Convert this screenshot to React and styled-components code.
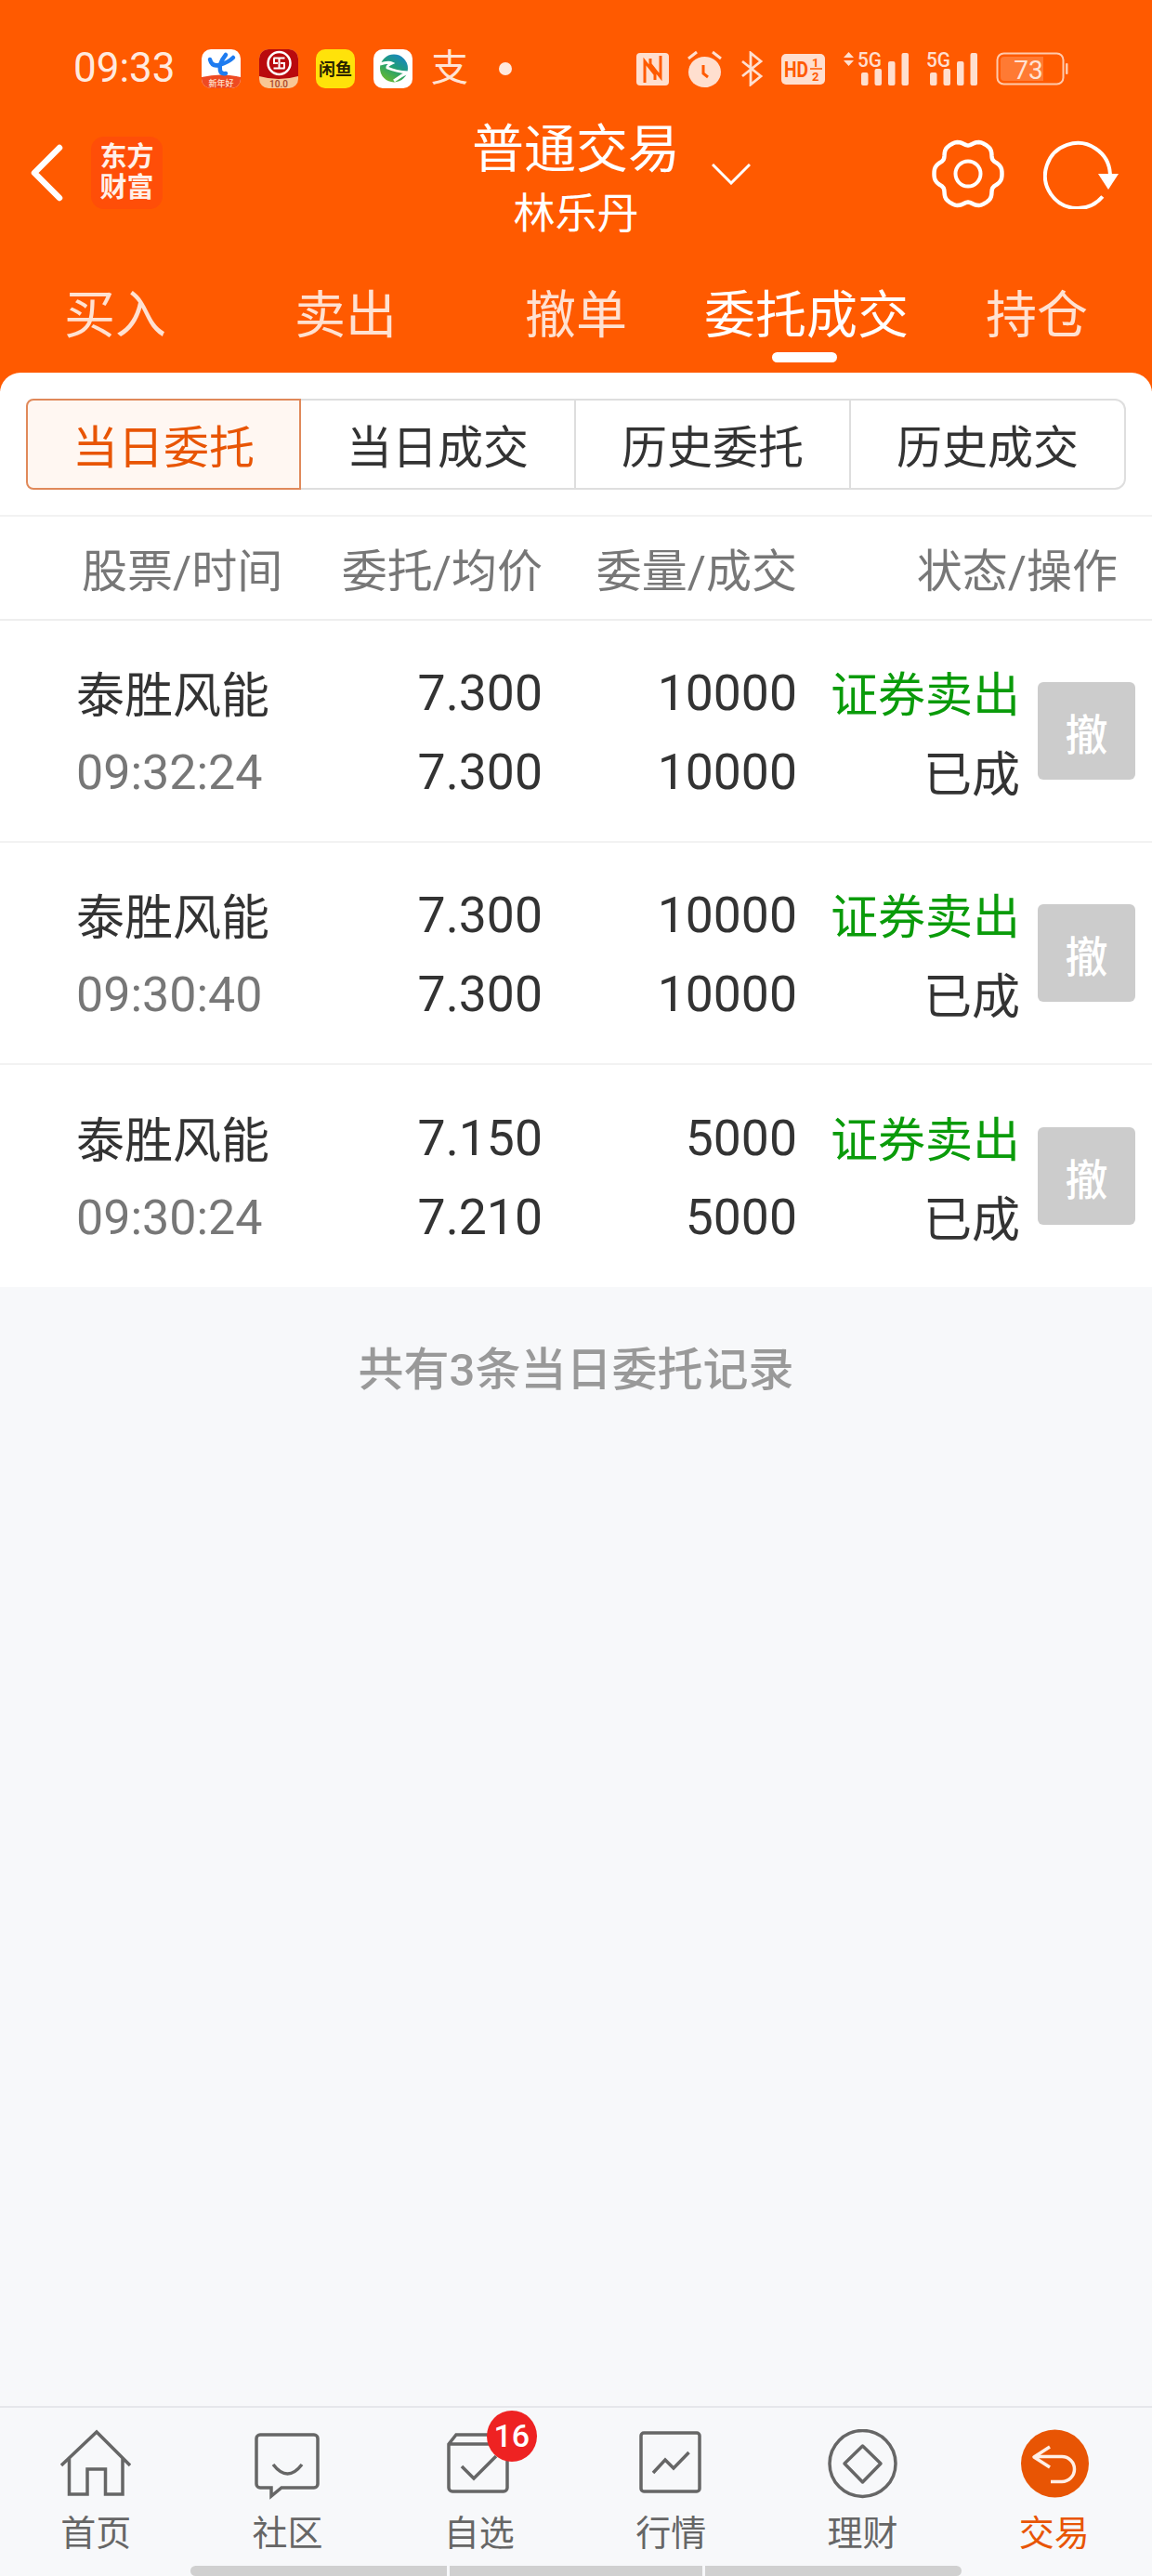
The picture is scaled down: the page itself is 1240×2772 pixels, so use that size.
import React from "react"
import styled, { createGlobalStyle } from "styled-components"

const FONT = `Roboto, "Noto Sans CJK SC", sans-serif`
const PEACH = "#FFDFCF"

const orders = [
  { name: "泰胜风能", time: "09:32:24", price: "7.300", avg: "7.300", qty: "10000", done: "10000" },
  { name: "泰胜风能", time: "09:30:40", price: "7.300", avg: "7.300", qty: "10000", done: "10000" },
  { name: "泰胜风能", time: "09:30:24", price: "7.150", avg: "7.210", qty: "5000", done: "5000" },
]

const mainTabs = ["买入", "卖出", "撤单", "委托成交", "持仓"]
const subTabs = ["当日委托", "当日成交", "历史委托", "历史成交"]

// wavy outline of the settings gear, broad lobes and tight notches
const gearPath = () => {
  const points = []
  for (let i = 0; i < 96; i++) {
    const a = (i / 96) * Math.PI * 2
    const dip = (1 - Math.cos(6 * a)) / 2
    const r = 36.5 - 6 * dip * dip
    points.push(`${(40 + r * Math.cos(a)).toFixed(2)} ${(40 + r * Math.sin(a)).toFixed(2)}`)
  }
  return `M${points.join("L")}Z`
}

function TelecomIcon() {
  return (
    <svg width="42" height="42" viewBox="0 0 42 42">
      <rect width="42" height="42" rx="10" fill="#fff" />
      <path d="M0 30 Q21 25 42 30 V32 A10 10 0 0 1 32 42 H10 A10 10 0 0 1 0 32Z" fill="#EE4A22" />
      <path d="M9 11 Q11 19 19 17 Q29 14 34 9 M26 6 Q18 16 20 23 Q21 27 26 26" fill="none" stroke="#1F7CF0" strokeWidth="4.500" strokeLinecap="round" />
      <text x="21" y="40" fontSize="9" fontWeight="500" fill="#FFE3D0" textAnchor="middle" fontFamily={FONT}>新年好</text>
    </svg>
  )
}

function BankIcon() {
  return (
    <svg width="42" height="42" viewBox="0 0 42 42">
      <rect width="42" height="42" rx="10" fill="#F8C795" />
      <path d="M0 10 A10 10 0 0 1 10 0 H32 A10 10 0 0 1 42 10 V29 Q21 35 0 29Z" fill="#B90A0E" />
      <circle cx="21.500" cy="15" r="12" fill="none" stroke="#fff" strokeWidth="2.500" />
      <path d="M15.500 9.500 H27.500 M15.500 20.500 H27.500 M16 9.500 V15 H20 M27 20.500 V15 H23 M21.500 9.500 V20.500" fill="none" stroke="#fff" strokeWidth="2" />
      <text x="21" y="40.500" fontSize="10" fontWeight="500" fill="#A8452A" textAnchor="middle" fontFamily={FONT}>10.0</text>
    </svg>
  )
}

function XianyuIcon() {
  return (
    <svg width="42" height="42" viewBox="0 0 42 42">
      <rect width="42" height="42" rx="10" fill="#FFE20A" />
      <text x="21" y="27.500" fontSize="18" fontWeight="700" fill="#2A2300" textAnchor="middle" fontFamily={FONT}>闲鱼</text>
    </svg>
  )
}

function GreenIcon() {
  return (
    <svg width="42" height="42" viewBox="0 0 42 42">
      <defs>
        <linearGradient id="globe" x1="0.8" y1="0" x2="0.2" y2="1">
          <stop offset="0" stopColor="#1784C8" />
          <stop offset="0.5" stopColor="#22A06F" />
          <stop offset="1" stopColor="#6DBB2C" />
        </linearGradient>
      </defs>
      <rect width="42" height="42" rx="10" fill="#fff" />
      <ellipse cx="22" cy="20.500" rx="15" ry="15" fill="url(#globe)" />
      <path d="M7 16 Q16 13 20 15 Q14 18 15 20 Q24 24 37 25 Q30 28 22 34" fill="none" stroke="#fff" strokeWidth="3" />
    </svg>
  )
}

function NfcIcon() {
  return (
    <svg width="35" height="35" viewBox="0 0 35 35">
      <rect width="35" height="35" rx="4" fill={PEACH} />
      <path d="M9 32 V9 L20 23 V29 M26 3 V26 L15 12 V6" fill="none" stroke="#FF5A00" strokeWidth="3" />
    </svg>
  )
}

function AlarmIcon() {
  return (
    <svg width="37" height="40" viewBox="0 0 37 40">
      <ellipse cx="18.500" cy="23.500" rx="17.500" ry="16.500" fill={PEACH} />
      <path d="M1 9 L10 2 M36 9 L27 2" stroke={PEACH} strokeWidth="3" />
      <path d="M17 16 V25 L22 29" fill="none" stroke="#FF5A00" strokeWidth="3" />
    </svg>
  )
}

function BluetoothIcon() {
  return (
    <svg width="25" height="38" viewBox="0 0 25 38">
      <path d="M2 11 L22 27 L11 36 V2 L22 11 L2 27" fill="none" stroke={PEACH} strokeWidth="2.800" />
    </svg>
  )
}

function HdIcon() {
  return (
    <svg width="47" height="33" viewBox="0 0 47 33">
      <rect width="47" height="33" rx="5" fill={PEACH} />
      <text x="3" y="25" fontSize="23" fontWeight="700" fill="#FF5A00" fontFamily={FONT} textLength="26" lengthAdjust="spacingAndGlyphs">HD</text>
      <text x="33" y="14" fontSize="13" fontWeight="700" fill="#FF5A00" fontFamily={FONT}>1</text>
      <path d="M31 16 H44" stroke="#FF5A00" strokeWidth="1.500" />
      <text x="33" y="29" fontSize="13" fontWeight="700" fill="#FF5A00" fontFamily={FONT}>2</text>
    </svg>
  )
}

function SignalIcon({ withArrows }) {
  const x = withArrows ? 15 : 0
  return (
    <svg width={55 + x} height="54" viewBox={`0 -8 ${55 + x} 54`}>
      {withArrows && <path d="M5.500 1 L11 7 H0Z M5.500 16 L11 10 H0Z" fill={PEACH} />}
      <text x={x} y="16.500" fontSize="22" fontWeight="500" fill={PEACH} fontFamily={FONT} textLength="26" lengthAdjust="spacingAndGlyphs">5G</text>
      <rect x={x + 4} y="23" width="7.500" height="14" rx="2" fill={PEACH} />
      <rect x={x + 18.500} y="19" width="7.500" height="18" rx="2" fill={PEACH} />
      <rect x={x + 33} y="11" width="7.500" height="26" rx="2" fill={PEACH} />
      <rect x={x + 47.500} y="2" width="7.500" height="35" rx="2" fill={PEACH} />
    </svg>
  )
}

function BatteryIcon() {
  return (
    <svg width="78" height="36" viewBox="0 0 78 36">
      <rect x="1.500" y="1.500" width="71" height="33" rx="7" fill="none" stroke="#FFC9AC" strokeWidth="2" />
      <path d="M5 9 A4 4 0 0 1 9 5 H51 V31 H9 A4 4 0 0 1 5 27Z" fill="#FF7A33" />
      <rect x="75" y="12" width="2.500" height="12" rx="1" fill="#FFC9AC" />
      <text x="35" y="28.500" fontSize="28" fill="#FFE3D4" textAnchor="middle" fontFamily={FONT}>73</text>
    </svg>
  )
}

function NavGlyph({ name }) {
  if (name === "home")
    return (
      <NavSvg viewBox="0 0 76 76">
        <path d="M1 39 L39 3 L75 39 M9.500 31 V70 H29 V43 H48.500 V70 H67 V31" />
      </NavSvg>
    )
  if (name === "chat")
    return (
      <NavSvg viewBox="0 0 76 76">
        <path d="M9 6 H67 a4 4 0 0 1 4 4 V59 a4 4 0 0 1 -4 4 H32 L21 72 V63 H9 a4 4 0 0 1 -4 -4 V10 a4 4 0 0 1 4 -4Z" />
        <path d="M23 38 Q38.500 58 54 38" />
      </NavSvg>
    )
  if (name === "box")
    return (
      <NavSvg viewBox="0 0 76 76">
        <path d="M5 16 L13 6 H60 L68 16 V63 a4 4 0 0 1 -4 4 H9 a4 4 0 0 1 -4 -4Z M5 16 H68" />
        <path d="M19 40 L32 53 L56 29" />
      </NavSvg>
    )
  if (name === "chart")
    return (
      <NavSvg viewBox="0 0 76 76">
        <rect x="6" y="4" width="63" height="63" rx="3" />
        <path d="M19 47 L32 33 L41 42 L57.500 25" />
      </NavSvg>
    )
  if (name === "diamond")
    return (
      <NavSvg viewBox="0 0 76 76">
        <circle cx="38.500" cy="37" r="35.500" />
        <path d="M19 37 L38.500 18 L58 37 L38.500 57Z" strokeLinejoin="round" />
      </NavSvg>
    )
  return (
    <NavSvg viewBox="0 0 76 76">
      <circle cx="38.500" cy="37" r="36.500" fill="#E85504" stroke="none" />
      <path d="M33 19 L16 30 L33 41 M17 29.500 H46 a13.500 13.500 0 0 1 0 27 H34" stroke="#FFEFE6" strokeLinejoin="round" />
    </NavSvg>
  )
}

const navItems = [
  { icon: "home", label: "首页" },
  { icon: "chat", label: "社区" },
  { icon: "box", label: "自选", badge: 16 },
  { icon: "chart", label: "行情" },
  { icon: "diamond", label: "理财" },
  { icon: "trade", label: "交易", active: true },
]

export default function App() {
  return (
    <Page>
      <GlobalStyle />
      <Header>
        <StatusBar>
          <StatusGroup>
            <Clock>09:33</Clock>
            <AppIcons>
              <TelecomIcon />
              <BankIcon />
              <XianyuIcon />
              <GreenIcon />
              <PayGlyph>支</PayGlyph>
              <MoreDot />
            </AppIcons>
          </StatusGroup>
          <SystemIcons>
            <NfcIcon />
            <AlarmIcon />
            <BluetoothIcon />
            <HdIcon />
            <SignalIcon withArrows />
            <SignalIcon />
            <BatteryIcon />
          </SystemIcons>
        </StatusBar>
        <TopBar>
          <TopLeft>
            <svg width="36" height="62" viewBox="0 0 36 62">
              <path d="M32 4 L5 31 L32 58" fill="none" stroke="#fff" strokeWidth="6.500" strokeLinecap="round" strokeLinejoin="round" />
            </svg>
            <Logo>东方<br />财富</Logo>
          </TopLeft>
          <TitleBlock>
            <Title>普通交易</Title>
            <Account>林乐丹</Account>
          </TitleBlock>
          <TopRight>
            <svg width="42" height="23" viewBox="0 0 42 23">
              <path d="M1 1 L21 21 L41 1" fill="none" stroke="#fff" strokeWidth="3" />
            </svg>
            <ActionIcons>
              <svg width="80" height="80" viewBox="0 0 80 80">
                <path d={gearPath()} fill="none" stroke="#fff" strokeWidth="4.500" strokeLinejoin="round" />
                <circle cx="40" cy="40" r="13.500" fill="none" stroke="#fff" strokeWidth="4" />
              </svg>
              <svg width="82" height="76" viewBox="0 0 82 76">
                <path d="M63.800 62.500 A35 35 0 1 1 71.900 38" fill="none" stroke="#fff" strokeWidth="4" />
                <path d="M59 38 H81 L70 55Z" fill="#fff" />
              </svg>
            </ActionIcons>
          </TopRight>
        </TopBar>
        <MainTabs>
          {mainTabs.map((tab) => (
            <MainTab key={tab} $active={tab === "委托成交"}>{tab}</MainTab>
          ))}
        </MainTabs>
      </Header>

      <Sheet>
        <Segmented>
          {subTabs.map((tab, i) => (
            <Segment key={tab} $active={i === 0}>{tab}</Segment>
          ))}
        </Segmented>
        <HeadRow>
          <span>股票/时间</span>
          <HeadCell>委托/均价</HeadCell>
          <HeadCell>委量/成交</HeadCell>
          <HeadCell>状态/操作</HeadCell>
        </HeadRow>
        {orders.map((order) => (
          <OrderRow key={order.time}>
            <StockName>{order.name}</StockName>
            <Num>{order.price}</Num>
            <Num>{order.qty}</Num>
            <SellTag>证券卖出</SellTag>
            <CancelButton>撤</CancelButton>
            <TimeText>{order.time}</TimeText>
            <Num>{order.avg}</Num>
            <Num>{order.done}</Num>
            <StateText>已成</StateText>
          </OrderRow>
        ))}
      </Sheet>

      <Content>
        <Note>共有3条当日委托记录</Note>
      </Content>

      <BottomNav>
        <NavItems>
          {navItems.map((item) => (
            <NavItem key={item.label} $active={item.active}>
              <NavIcon>
                <NavGlyph name={item.icon} />
                {item.badge && <Badge>{item.badge}</Badge>}
              </NavIcon>
              {item.label}
            </NavItem>
          ))}
        </NavItems>
        <HomeBar>
          <HomeBarPart $width={276} $first />
          <HomeBarPart $width={272} />
          <HomeBarPart $width={276} $last />
        </HomeBar>
      </BottomNav>
    </Page>
  )
}

const GlobalStyle = createGlobalStyle`
  html, body {
    margin: 0;
    padding: 0;
  }
  body {
    font-family: ${FONT};
  }
`
const Page = styled.div`
  width: 1240px;
  height: 2772px;
  display: flex;
  flex-direction: column;
  overflow: hidden;
  background: #f7f8fa;
`
const Header = styled.header`
  background: #ff5a00;
  padding: 53px 0 15px;
  color: #fff;
`
const StatusBar = styled.div`
  height: 42px;
  display: flex;
  justify-content: space-between;
  align-items: center;
  padding: 0 90px 0 79px;
`
const StatusGroup = styled.div`
  display: flex;
  align-items: center;
  gap: 30px;
`
const Clock = styled.div`
  width: 108px;
  font-size: 44px;
  line-height: 40px;
  padding-bottom: 2px;
  color: #ffeadf;
`
const AppIcons = styled.div`
  display: flex;
  align-items: center;
  gap: 19.500px;
`
const PayGlyph = styled.div`
  width: 40px;
  margin-left: 1px;
  font-size: 40px;
  line-height: 42px;
  color: #ffe3d4;
`
const MoreDot = styled.i`
  width: 14px;
  height: 14px;
  margin-left: 13px;
  border-radius: 50%;
  background: #ffe9dd;
`
const SystemIcons = styled.div`
  display: flex;
  align-items: center;
  gap: 19.600px;
`
const TopBar = styled.div`
  margin-top: 31px;
  height: 140px;
  display: grid;
  grid-template-columns: 1fr auto 1fr;
`
const TopLeft = styled.div`
  height: 120px;
  display: flex;
  align-items: center;
  gap: 30px;
  padding-left: 32px;
`
const Logo = styled.div`
  width: 77px;
  height: 78px;
  border-radius: 14px;
  background: #ff4e08;
  color: #fff0e8;
  font-size: 29px;
  font-weight: 700;
  line-height: 33px;
  text-align: center;
  padding-top: 6px;
  box-sizing: border-box;
`
const TitleBlock = styled.div`
  text-align: center;
`
const Title = styled.div`
  font-size: 56px;
  line-height: 70px;
`
const Account = styled.div`
  font-size: 45px;
  line-height: 70px;
`
const TopRight = styled.div`
  height: 122px;
  display: flex;
  align-items: center;
  justify-content: space-between;
  padding: 0 35px 0 34px;
`
const ActionIcons = styled.div`
  display: flex;
  align-items: center;
  gap: 41px;
`
const MainTabs = styled.nav`
  display: grid;
  grid-template-columns: repeat(5, 1fr);
`
const MainTab = styled.div`
  position: relative;
  height: 140px;
  line-height: 146px;
  text-align: center;
  font-size: 55px;
  color: ${(p) => (p.$active ? "#fff" : "rgba(255, 255, 255, 0.82)")};

  &::after {
    content: "";
    display: ${(p) => (p.$active ? "block" : "none")};
    position: absolute;
    left: 50%;
    bottom: 16px;
    width: 70px;
    height: 11px;
    margin-left: -37px;
    border-radius: 6px;
    background: #fff;
  }
`
const Sheet = styled.main`
  margin-top: -20px;
  position: relative;
  background: #fff;
  border-radius: 22px 22px 0 0;
  padding-top: 28px;
`
const Segmented = styled.div`
  margin: 0 28px 27px;
  display: grid;
  grid-template-columns: repeat(4, 1fr);
`
const Segment = styled.div`
  height: 98px;
  box-sizing: border-box;
  display: flex;
  align-items: center;
  justify-content: center;
  padding-bottom: 2px;
  font-size: 49px;
  color: ${(p) => (p.$active ? "#E85504" : "#333")};
  background: ${(p) => (p.$active ? "#FFF7F2" : "#fff")};
  border: 2px solid ${(p) => (p.$active ? "#E0895A" : "#DEDEDE")};
  border-left-width: ${(p) => (p.$active ? "2px" : "0")};

  &:first-child {
    border-radius: 8px 0 0 8px;
  }
  &:last-child {
    border-radius: 0 12px 12px 0;
  }
`
const HeadRow = styled.div`
  height: 114px;
  box-sizing: border-box;
  display: grid;
  grid-template-columns: 226px 270px 274px 1fr;
  align-items: center;
  padding: 0 37px 2px 88px;
  border-top: 2px solid #f2f2f2;
  border-bottom: 2px solid #eeeeee;
  font-size: 49px;
  color: #777;
`
const HeadCell = styled.span`
  text-align: right;
`
const OrderRow = styled.div`
  height: 239px;
  box-sizing: border-box;
  display: grid;
  grid-template-columns: 232px 270px 274px 240px 124px;
  grid-auto-rows: 85px;
  align-content: center;
  align-items: center;
  padding: 2px 0 0 82px;
  border-bottom: 2px solid #f2f2f2;
  font-size: 52px;
  color: #333;

  &:last-child {
    border-bottom: 0;
  }
`
const StockName = styled.div`
  padding-bottom: 2px;
`
const TimeText = styled.div`
  padding-top: 2px;
  color: #777;
`
const Num = styled.div`
  font-size: 53.500px;
  text-align: right;
`
const SellTag = styled.div`
  padding-bottom: 2px;
  font-size: 51px;
  text-align: right;
  color: #0a9b0a;
`
const StateText = styled.div`
  padding-bottom: 2px;
  text-align: right;
`
const CancelButton = styled.div`
  grid-column: 5;
  grid-row: 1 / span 2;
  justify-self: end;
  margin-top: -2px;
  width: 105px;
  height: 105px;
  border-radius: 6px;
  background: #cccccc;
  color: #fff;
  font-size: 46px;
  font-weight: 500;
  display: flex;
  align-items: center;
  justify-content: center;
`
const Content = styled.div`
  flex: 1;
  padding-top: 56px;
  text-align: center;
`
const Note = styled.div`
  font-size: 49px;
  line-height: 68px;
  font-weight: 500;
  color: #999;
`
const BottomNav = styled.footer`
  border-top: 2px solid #e6e7eb;
`
const NavItems = styled.div`
  display: grid;
  grid-template-columns: repeat(6, 1fr);
  padding: 23px 2px 0 0;
`
const NavItem = styled.div`
  display: flex;
  flex-direction: column;
  align-items: center;
  gap: 11px;
  font-size: 38px;
  line-height: 50px;
  color: ${(p) => (p.$active ? "#E85504" : "#666")};
`
const NavIcon = styled.div`
  position: relative;
  width: 76px;
  height: 76px;
`
const NavSvg = styled.svg`
  display: block;
  width: 76px;
  height: 76px;
  fill: none;
  stroke: #666;
  stroke-width: 3.500;
`
const Badge = styled.span`
  position: absolute;
  left: 46px;
  top: -20px;
  width: 54px;
  height: 55px;
  border-radius: 50%;
  background: #ee2222;
  color: #fff;
  font-size: 34px;
  font-weight: 500;
  line-height: 55px;
  text-align: center;
`
const HomeBar = styled.div`
  margin-top: 10px;
  display: flex;
  justify-content: center;
  gap: 3px;
`
const HomeBarPart = styled.i`
  width: ${(p) => p.$width}px;
  height: 11px;
  background: #d0d0d0;
  border-radius: ${(p) => (p.$first ? "6px 0 0 6px" : p.$last ? "0 6px 6px 0" : "0")};
`
